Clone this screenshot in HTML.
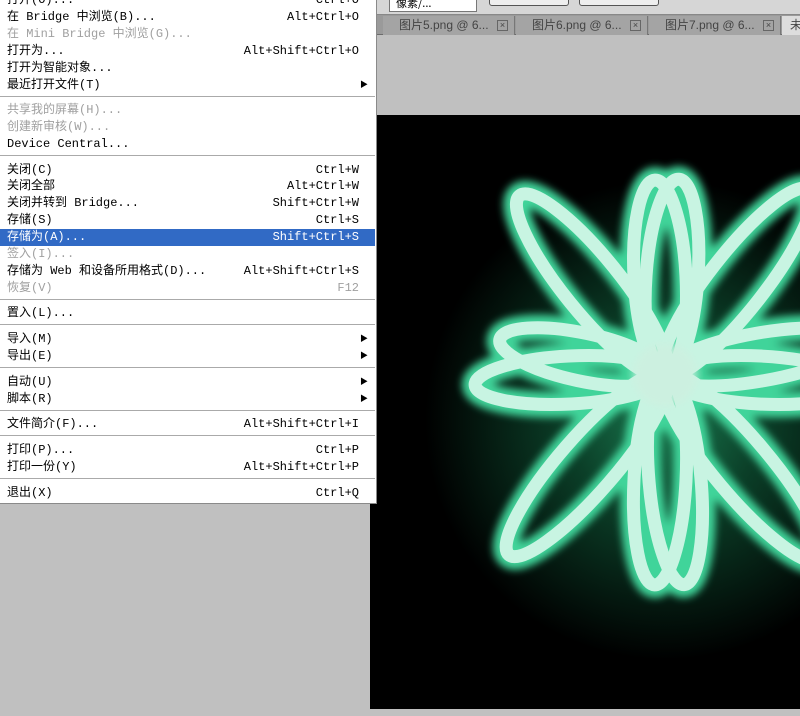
<!DOCTYPE html>
<html><head><meta charset="utf-8"><style>
*{margin:0;padding:0;box-sizing:border-box}
body{width:800px;height:716px;overflow:hidden;background:#c0c0c0;position:relative;font-family:"Liberation Mono","Noto Sans CJK SC",monospace;font-size:12px}
#top{position:absolute;left:377px;top:0;width:423px;height:15px;background:#d6d6d6;border-bottom:1px solid #888}
#tabs{position:absolute;left:377px;top:15px;width:423px;height:20px;background:#9a9a9a;border-bottom:1px solid #6c6c6c}
.tab{position:absolute;top:1px;height:19px;background:#a4a4a4;border-right:1px solid #777;color:#444;font-family:"Liberation Sans","Noto Sans CJK SC",sans-serif;font-size:12px;line-height:18px;padding-left:16px}
.tab .x{position:absolute;right:6px;top:4px;width:11px;height:11px;border:1px solid #666;font-size:9px;line-height:9px;text-align:center}
#canvas{position:absolute;left:370px;top:115px;width:430px;height:594px;background:#000;overflow:hidden}
#menu{position:absolute;left:0;top:-4px;width:377px;height:508px;background:#fff;border-right:1px solid #8a8a8a;border-bottom:1px solid #8a8a8a}
.r{position:absolute;left:0;width:375px;height:17px;line-height:17px;color:#000;padding-left:7px;white-space:pre}
.r .s{position:absolute;right:16px;top:0}
.r .a{position:absolute;right:7px;top:0;font-size:8px}
.d{color:#a0a0a0}
.h{background:#316ac5;color:#fff}
.sep{position:absolute;left:0;width:375px;height:2px;border-top:1px solid #aaa;border-bottom:1px solid #fff}
</style></head><body>
<div id="top">
 <div style="position:absolute;left:12px;top:-4px;width:88px;height:16px;background:#fff;border:1px solid #777;font-family:'Noto Sans CJK SC',sans-serif;font-size:11px;padding-left:6px;line-height:12px">像素/...</div>
 <div style="position:absolute;left:112px;top:-4px;width:80px;height:10px;border:1px solid #555;border-radius:3px;background:#eee"></div>
 <div style="position:absolute;left:202px;top:-4px;width:80px;height:10px;border:1px solid #555;border-radius:3px;background:#eee"></div>
</div>
<div id="tabs">
 <div class="tab" style="left:6px;width:132px">图片5.png @ 6...<span class="x">×</span></div>
 <div class="tab" style="left:139px;width:132px">图片6.png @ 6...<span class="x">×</span></div>
 <div class="tab" style="left:272px;width:132px">图片7.png @ 6...<span class="x">×</span></div>
 <div class="tab" style="left:405px;width:30px;background:#ddd;padding-left:8px">未</div>
</div>
<div id="canvas">
<svg width="430" height="594" viewBox="370 115 430 594">
<defs>
<radialGradient id="g" cx="665" cy="420" r="240" gradientUnits="userSpaceOnUse">
<stop offset="0" stop-color="#1a7a50"/><stop offset="0.4" stop-color="#0b3f28"/><stop offset="1" stop-color="#000"/></radialGradient>
<filter id="bl"><feGaussianBlur stdDeviation="4"/></filter>
</defs>
<rect x="370" y="115" width="430" height="594" fill="#000"/>
<circle cx="665" cy="420" r="240" fill="url(#g)"/>
<g fill="none">
<g stroke="#3fd49a" stroke-width="26" filter="url(#bl)">
<ellipse cx="660" cy="277" rx="97" ry="26" transform="rotate(-93 660 277)"/>
<ellipse cx="672" cy="277" rx="98" ry="26" transform="rotate(-86 672 277)"/>
<ellipse cx="592" cy="285" rx="115" ry="28" transform="rotate(-129 592 285)"/>
<ellipse cx="737" cy="282" rx="117" ry="28" transform="rotate(-52 737 282)"/>
<ellipse cx="570" cy="380" rx="95" ry="24" transform="rotate(177 570 380)"/>
<ellipse cx="582" cy="357" rx="84" ry="24" transform="rotate(-168 582 357)"/>
<ellipse cx="760" cy="357" rx="97" ry="24" transform="rotate(-10 760 357)"/>
<ellipse cx="760" cy="380" rx="95" ry="24" transform="rotate(3 760 380)"/>
<ellipse cx="587" cy="465" rx="119" ry="28" transform="rotate(131 587 465)"/>
<ellipse cx="742" cy="467" rx="121" ry="28" transform="rotate(50 742 467)"/>
<ellipse cx="660" cy="480" rx="105" ry="26" transform="rotate(93 660 480)"/>
<ellipse cx="675" cy="480" rx="105" ry="26" transform="rotate(85 675 480)"/>
</g>
<g stroke="#c8f4e2" stroke-width="13">
<ellipse cx="660" cy="277" rx="97" ry="26" transform="rotate(-93 660 277)"/>
<ellipse cx="672" cy="277" rx="98" ry="26" transform="rotate(-86 672 277)"/>
<ellipse cx="592" cy="285" rx="115" ry="28" transform="rotate(-129 592 285)"/>
<ellipse cx="737" cy="282" rx="117" ry="28" transform="rotate(-52 737 282)"/>
<ellipse cx="570" cy="380" rx="95" ry="24" transform="rotate(177 570 380)"/>
<ellipse cx="582" cy="357" rx="84" ry="24" transform="rotate(-168 582 357)"/>
<ellipse cx="760" cy="357" rx="97" ry="24" transform="rotate(-10 760 357)"/>
<ellipse cx="760" cy="380" rx="95" ry="24" transform="rotate(3 760 380)"/>
<ellipse cx="587" cy="465" rx="119" ry="28" transform="rotate(131 587 465)"/>
<ellipse cx="742" cy="467" rx="121" ry="28" transform="rotate(50 742 467)"/>
<ellipse cx="660" cy="480" rx="105" ry="26" transform="rotate(93 660 480)"/>
<ellipse cx="675" cy="480" rx="105" ry="26" transform="rotate(85 675 480)"/>
</g>
</g>
<circle cx="665" cy="375" r="32" fill="#cdf0e0" opacity="0.85" filter="url(#bl)"/>
</svg>
</div>
<div id="menu">
<div class="r" style="top:-4px">打开(O)...<span class="s">Ctrl+O</span></div>
<div class="r" style="top:13px">在 Bridge 中浏览(B)...<span class="s">Alt+Ctrl+O</span></div>
<div class="r d" style="top:30px">在 Mini Bridge 中浏览(G)...</div>
<div class="r" style="top:47px">打开为...<span class="s">Alt+Shift+Ctrl+O</span></div>
<div class="r" style="top:64px">打开为智能对象...</div>
<div class="r" style="top:81px">最近打开文件(T)<span class="a">▶</span></div>
<div class="sep" style="top:100px"></div>
<div class="r d" style="top:106px">共享我的屏幕(H)...</div>
<div class="r d" style="top:123px">创建新审核(W)...</div>
<div class="r" style="top:140px">Device Central...</div>
<div class="sep" style="top:159px"></div>
<div class="r" style="top:166px">关闭(C)<span class="s">Ctrl+W</span></div>
<div class="r" style="top:182px">关闭全部<span class="s">Alt+Ctrl+W</span></div>
<div class="r" style="top:199px">关闭并转到 Bridge...<span class="s">Shift+Ctrl+W</span></div>
<div class="r" style="top:216px">存储(S)<span class="s">Ctrl+S</span></div>
<div class="r h" style="top:233px">存储为(A)...<span class="s">Shift+Ctrl+S</span></div>
<div class="r d" style="top:250px">签入(I)...</div>
<div class="r" style="top:267px">存储为 Web 和设备所用格式(D)...<span class="s">Alt+Shift+Ctrl+S</span></div>
<div class="r d" style="top:284px">恢复(V)<span class="s">F12</span></div>
<div class="sep" style="top:303px"></div>
<div class="r" style="top:309px">置入(L)...</div>
<div class="sep" style="top:328px"></div>
<div class="r" style="top:335px">导入(M)<span class="a">▶</span></div>
<div class="r" style="top:352px">导出(E)<span class="a">▶</span></div>
<div class="sep" style="top:371px"></div>
<div class="r" style="top:378px">自动(U)<span class="a">▶</span></div>
<div class="r" style="top:395px">脚本(R)<span class="a">▶</span></div>
<div class="sep" style="top:414px"></div>
<div class="r" style="top:420px">文件简介(F)...<span class="s">Alt+Shift+Ctrl+I</span></div>
<div class="sep" style="top:439px"></div>
<div class="r" style="top:446px">打印(P)...<span class="s">Ctrl+P</span></div>
<div class="r" style="top:463px">打印一份(Y)<span class="s">Alt+Shift+Ctrl+P</span></div>
<div class="sep" style="top:482px"></div>
<div class="r" style="top:489px">退出(X)<span class="s">Ctrl+Q</span></div>
</div>
</body></html>
